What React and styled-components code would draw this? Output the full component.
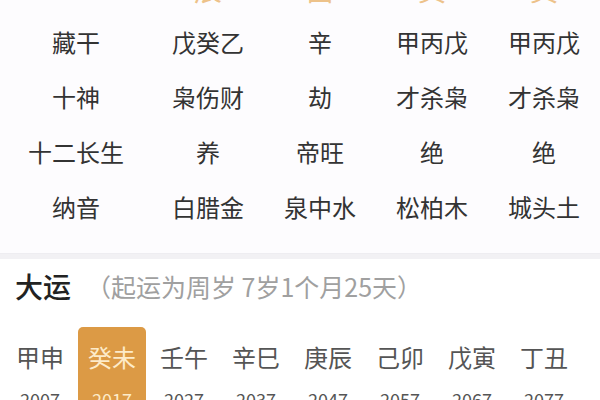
import React from 'react';
import styled, { createGlobalStyle } from 'styled-components';

const GlobalStyle = createGlobalStyle`
  html, body {
    margin: 0;
    padding: 0;
    background: #ffffff;
    overflow: hidden;
  }
  body {
    font-family: "Noto Sans CJK SC", "Noto Sans", sans-serif;
  }
`;

const Page = styled.div`
  width: 600px;
  height: 400px;
  overflow: hidden;
  background: #ffffff;
`;

const TableSection = styled.div`
  margin-top: -37px;
  padding-bottom: 19px;
  background: #fdfcfe;
`;

const Row = styled.div`
  display: grid;
  grid-template-columns: 152px repeat(4, 1fr);
  height: ${p => (p.$head ? '51px' : '55px')};
  align-items: center;
`;

const Cell = styled.div`
  text-align: center;
  font-size: ${p => (p.$head ? '28px' : '24px')};
  line-height: 30px;
  color: ${p => p.$color || '#333333'};
  white-space: nowrap;
`;

const Divider = styled.div`
  height: 5px;
  background: #f2f1f4;
  border-top: 1px solid #eeedf1;
`;

const DayunSection = styled.div`
  padding-top: 7px;
`;

const TitleRow = styled.div`
  display: flex;
  align-items: center;
  height: 40px;
  padding-left: 15px;
`;

const Title = styled.span`
  font-size: 28px;
  font-weight: 500;
  color: #222222;
`;

const Sub = styled.span`
  margin-left: 15px;
  font-size: 25px;
  color: #a0a0a0;
`;

const ItemRow = styled.div`
  display: grid;
  grid-template-columns: repeat(8, 72px);
  padding-left: 4px;
  margin-top: 21px;
`;

const Item = styled.div`
  display: flex;
  flex-direction: column;
  align-items: center;
  margin: 0 2px;
  padding-top: 15px;
  border-radius: 5px;
  height: 100px;
  background: ${p => (p.$active ? '#dc9a45' : 'transparent')};
`;

const Gz = styled.div`
  font-size: 24px;
  line-height: 30px;
  color: ${p => (p.$active ? '#fdebc9' : '#555555')};
`;

const Year = styled.div`
  margin-top: 15px;
  font-size: 18px;
  line-height: 24px;
  color: ${p => (p.$active ? '#fdebc9' : '#555555')};
`;

const rows = [
  ['藏干', '戊癸乙', '辛', '甲丙戊', '甲丙戊'],
  ['十神', '枭伤财', '劫', '才杀枭', '才杀枭'],
  ['十二长生', '养', '帝旺', '绝', '绝'],
  ['纳音', '白腊金', '泉中水', '松柏木', '城头土'],
];

const dayun = [
  ['甲申', '2007'],
  ['癸未', '2017'],
  ['壬午', '2027'],
  ['辛巳', '2037'],
  ['庚辰', '2047'],
  ['己卯', '2057'],
  ['戊寅', '2067'],
  ['丁丑', '2077'],
];

const App = () => (
  <Page>
    <GlobalStyle />
    <TableSection>
      <Row $head>
        <Cell $head />
        <Cell $head $color="#edc28a">辰</Cell>
        <Cell $head $color="#edc28a">酉</Cell>
        <Cell $head $color="#edc28a">寅</Cell>
        <Cell $head $color="#edc28a">寅</Cell>
      </Row>
      {rows.map(r => (
        <Row key={r[0]}>
          {r.map((c, i) => (
            <Cell key={i}>{c}</Cell>
          ))}
        </Row>
      ))}
    </TableSection>
    <Divider />
    <DayunSection>
      <TitleRow>
        <Title>大运</Title>
        <Sub>（起运为周岁 7岁1个月25天）</Sub>
      </TitleRow>
      <ItemRow>
        {dayun.map(([gz, y], i) => (
          <Item key={gz} $active={i === 1}>
            <Gz $active={i === 1}>{gz}</Gz>
            <Year $active={i === 1}>{y}</Year>
          </Item>
        ))}
      </ItemRow>
    </DayunSection>
  </Page>
);

export default App;
